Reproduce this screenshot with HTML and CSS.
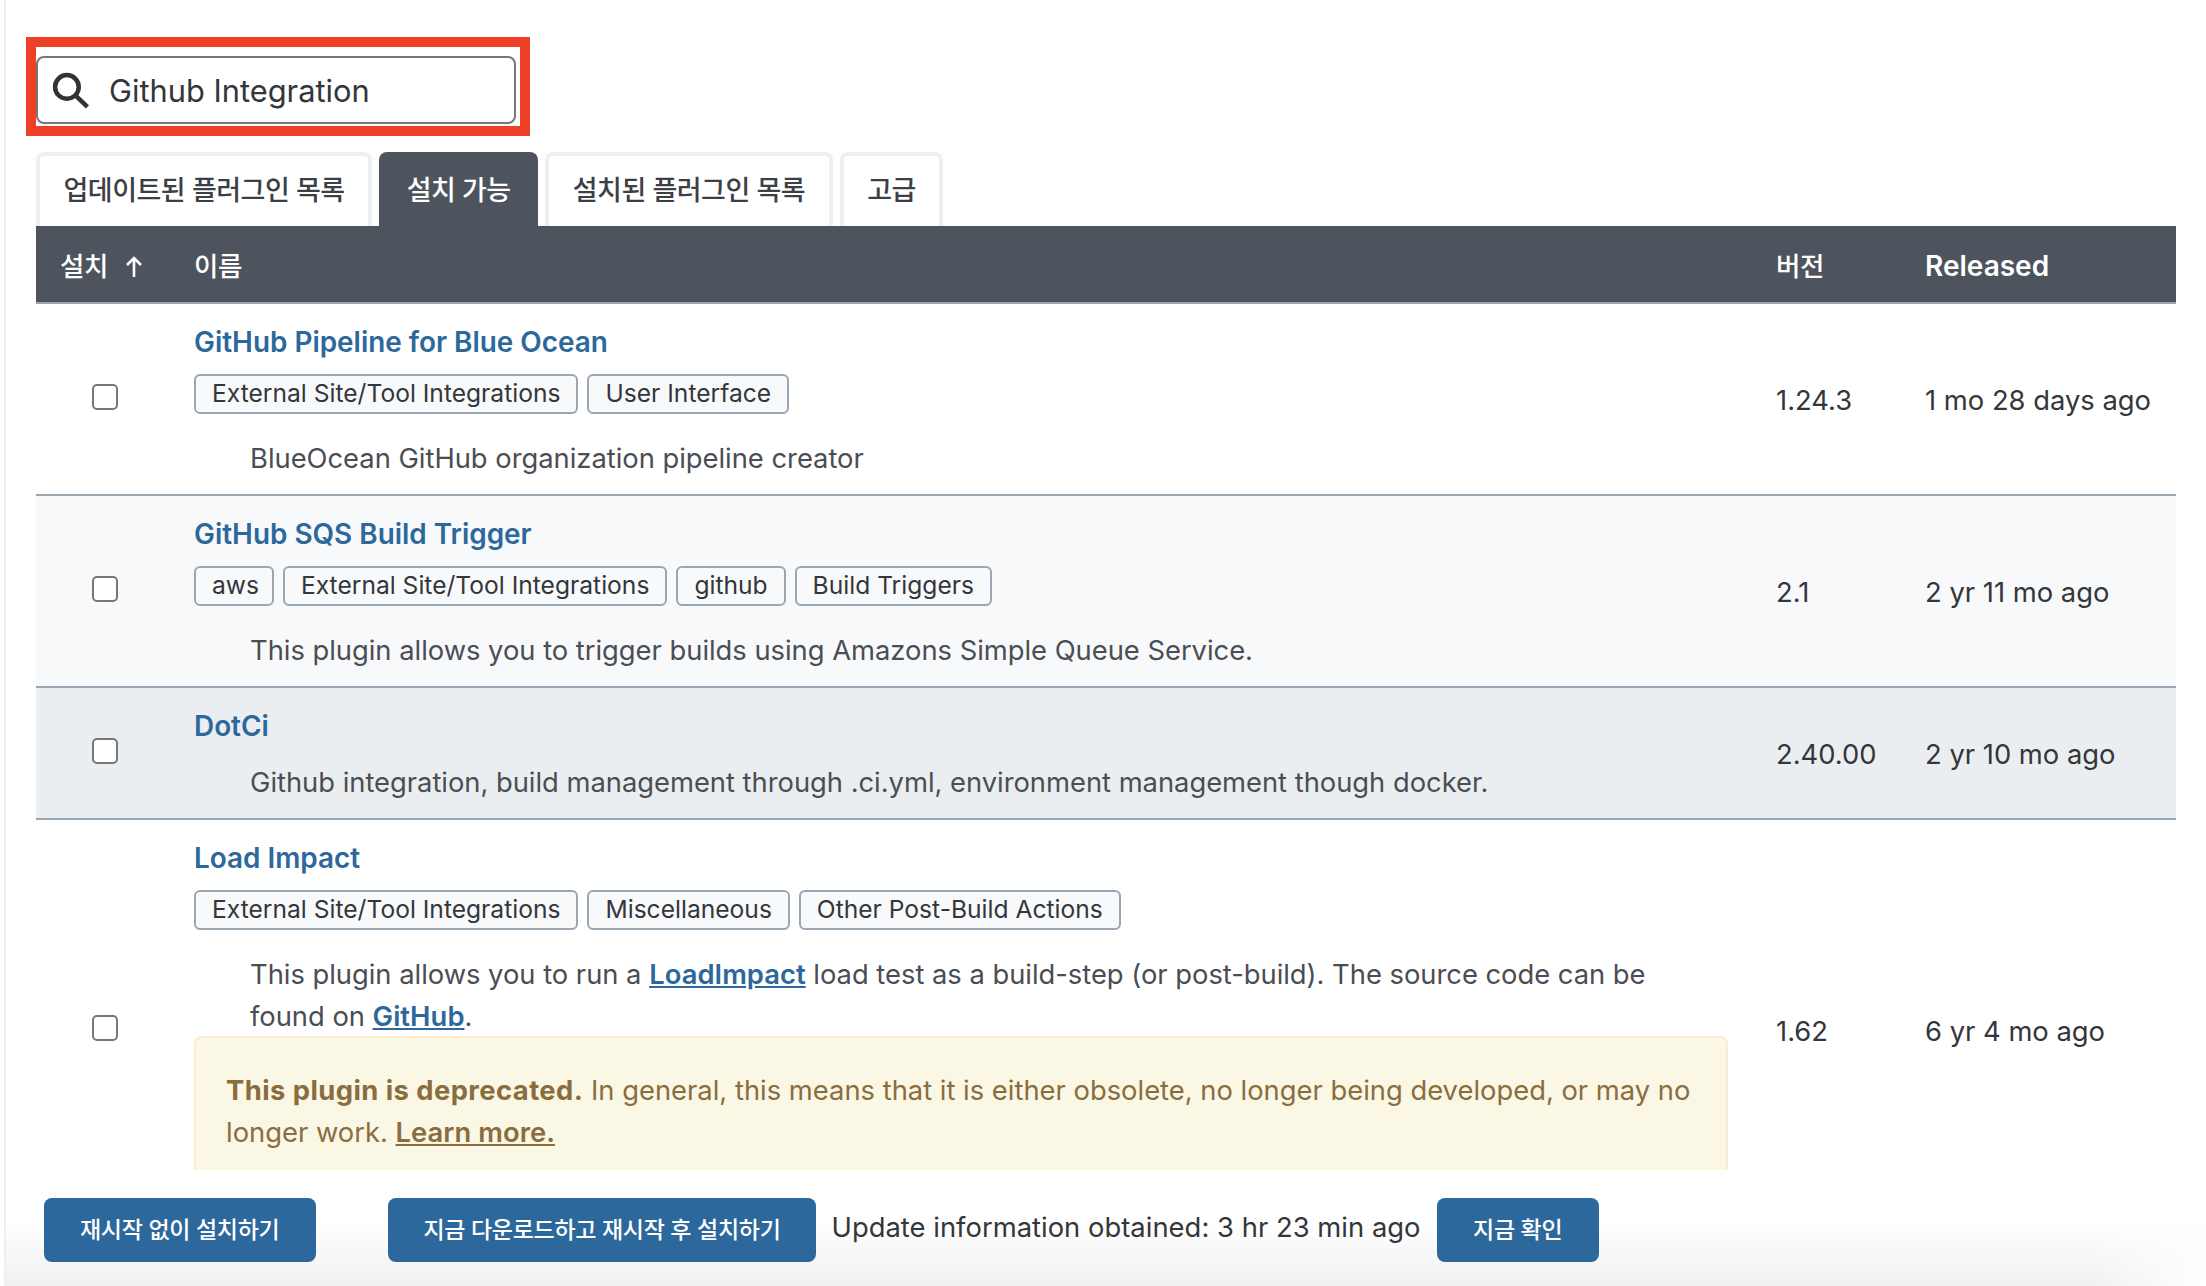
FILE: index.html
```html
<!DOCTYPE html>
<html lang="ko">
<head>
<meta charset="utf-8">
<title>플러그인 관리</title>
<link rel="stylesheet" href="styles.css">
</head>
<body>
<div class="page">
  <div class="content">
    <div class="search-mark">
      <label class="search">
        <svg class="search-icon" viewBox="0 0 36 36" aria-hidden="true"><circle cx="14.500" cy="14.500" r="11.500"/><path d="M23 23 34.500 34"/></svg>
        <span class="search-text">Github Integration</span>
      </label>
    </div>
    <nav class="tabs">
      <a class="tab">업데이트된 플러그인 목록</a>
      <a class="tab active">설치 가능</a>
      <a class="tab">설치된 플러그인 목록</a>
      <a class="tab">고급</a>
    </nav>
    <table class="plugins">
      <colgroup><col class="c-check"><col class="c-name"><col class="c-ver"><col class="c-rel"></colgroup>
      <thead>
        <tr>
          <th class="th-check"><span class="ko">설치</span><svg class="arrow" viewBox="0 0 18 22" aria-hidden="true"><path d="M9 21V2M2 9l7-7 7 7"/></svg></th>
          <th><span class="ko">이름</span></th>
          <th><span class="ko">버전</span></th>
          <th>Released</th>
        </tr>
      </thead>
      <tbody>
        <tr>
          <td class="check"><input type="checkbox"></td>
          <td>
            <a class="title">GitHub Pipeline for Blue Ocean</a>
            <div class="labels"><span class="label">External Site/Tool Integrations</span><span class="label">User Interface</span></div>
            <p class="desc">BlueOcean GitHub organization pipeline creator</p>
          </td>
          <td>1.24.3</td>
          <td>1 mo 28 days ago</td>
        </tr>
        <tr class="alt">
          <td class="check"><input type="checkbox"></td>
          <td>
            <a class="title">GitHub SQS Build Trigger</a>
            <div class="labels"><span class="label tight">aws</span><span class="label">External Site/Tool Integrations</span><span class="label">github</span><span class="label">Build Triggers</span></div>
            <p class="desc">This plugin allows you to trigger builds using Amazons Simple Queue Service.</p>
          </td>
          <td>2.1</td>
          <td>2 yr 11 mo ago</td>
        </tr>
        <tr class="hover">
          <td class="check"><input type="checkbox"></td>
          <td>
            <a class="title">DotCi</a>
            <p class="desc">Github integration, build management through .ci.yml, environment management though docker.</p>
          </td>
          <td>2.40.00</td>
          <td>2 yr 10 mo ago</td>
        </tr>
        <tr>
          <td class="check"><input type="checkbox"></td>
          <td>
            <a class="title">Load Impact</a>
            <div class="labels"><span class="label">External Site/Tool Integrations</span><span class="label">Miscellaneous</span><span class="label">Other Post-Build Actions</span></div>
            <p class="desc">This plugin allows you to run a <a class="inline">LoadImpact</a> load test as a build-step (or post-build). The source code can be found on <a class="inline">GitHub</a>.</p>
            <div class="warning"><strong>This plugin is deprecated.</strong> In general, this means that it is either obsolete, no longer being developed, or may no longer work. <a class="learn">Learn more.</a></div>
          </td>
          <td>1.62</td>
          <td>6 yr 4 mo ago</td>
        </tr>
      </tbody>
    </table>
  </div>
  <footer class="bar">
    <button class="btn first">재시작 없이 설치하기</button>
    <button class="btn wide">지금 다운로드하고 재시작 후 설치하기</button>
    <span class="status">Update information obtained: 3 hr 23 min ago</span>
    <button class="btn">지금 확인</button>
  </footer>
</div>
</body>
</html>
```
FILE: styles.css
```css
* { box-sizing: border-box; }
html, body { margin: 0; height: 100%; overflow: hidden; background: #fff; }
body {
  font-family: Inter, "Noto Sans CJK KR", sans-serif;
  font-size: 27.360px;
  line-height: 42px;
  color: #33363a;
}
.page {
  height: 1286px;
  margin-left: 4px;
  border-left: 2px solid #edf0f2;
  display: flex;
  flex-direction: column;
}
.content {
  height: 1170px;
  overflow: hidden;
  padding: 37px 30px 0 30px;
}
.search-mark {
  width: 504px;
  height: 99px;
  margin-left: -10px;
  border: 10px solid #ee4026;
  padding: 9px 4px 2px 0;
}
.search {
  display: flex;
  align-items: center;
  height: 68px;
  border: 2px solid #777;
  border-radius: 8px;
  padding-left: 14px;
  gap: 20px;
}
.search-icon { width: 37px; height: 37px; fill: none; stroke: #333; stroke-width: 4.400; flex: none; }
.search-text { font-size: 30.800px; padding-top: 1px; }
.tabs { display: flex; gap: 7px; margin-top: 16px; height: 74px; }
.tab {
  display: flex;
  align-items: center;
  padding: 0 23.500px;
  border: 4px solid #edf0f3;
  border-bottom: 0;
  border-radius: 8px 8px 0 0;
  font-size: 27px;
  letter-spacing: -0.5px;
  font-weight: 500;
  color: #3c4046;
}
.tab.active { background: #4d545d; border-color: #4d545d; color: #fff; }
.plugins {
  width: 2140px;
  table-layout: fixed;
  border-collapse: separate;
  border-spacing: 0;
}
.c-check { width: 134px; }
.c-ver { width: 149px; }
.c-rel { width: 275px; }
.plugins th {
  background: #4d545d;
  color: #fff;
  font-size: 28px;
  font-weight: 600;
  text-align: left;
  height: 78px;
  padding: 3px 0 0 24px;
  border-bottom: 2px solid #9aa7b3;
}
.ko { font-size: 26.500px; letter-spacing: -0.3px; font-weight: 500; }
.th-check { white-space: nowrap; }
.arrow {
  width: 18px;
  height: 22px;
  margin-left: 17px;
  vertical-align: -2px;
  fill: none;
  stroke: #fff;
  stroke-width: 2.600;
}
.plugins td {
  padding: 17px 24px 15px;
  border-bottom: 2px solid #9aa7b3;
  vertical-align: middle;
}
.plugins td:nth-child(n+3) { padding-right: 0; padding-top: 17px; }
.plugins tbody tr:last-child td { border-bottom: 0; }
.alt td { background: #f8f9fa; }
.hover td { background: #ebeef1; }
.plugins td.check { padding: 0 0 4px 56px; }
.check input {
  appearance: none;
  display: block;
  width: 26px;
  height: 26px;
  margin: 0;
  border: 2px solid #777;
  border-radius: 5px;
  background: #fff;
}
.title { display: block; font-size: 27.900px; font-weight: 600; color: #2c689b; }
.labels { display: flex; gap: 9px; margin-top: 11px; margin-bottom: 23px; }
.label {
  height: 40px;
  padding: 0 16px;
  border: 2px solid #9aa7b3;
  border-radius: 6px;
  background: #f8f9fa;
  font-size: 24.600px;
  line-height: 35px;
  color: #33363a;
}
.label.tight { padding-right: 13px; }
.desc { margin: 14px 0 0; padding: 0 30px 0 56px; color: #4a4e54; letter-spacing: -0.02px; }
.inline { color: #2c689b; font-weight: 600; text-decoration: underline; letter-spacing: 0.05px; }
.warning {
  margin: -1px 0 39px;
  padding: 31px 30px;
  border: 2px solid #faecd0;
  border-radius: 8px;
  background: #fbf7e5;
  color: #8a6d3f;
}
.warning strong { font-weight: 700; letter-spacing: 0.44px; }
.learn { font-weight: 600; text-decoration: underline; letter-spacing: 0.05px; }
.bar {
  flex: 1;
  display: flex;
  align-items: flex-start;
  gap: 16px;
  padding: 28px 0 0 38px;
  background:
    radial-gradient(circle at 100% 100%, #fff 0, rgba(255,255,255,0) 120px),
    linear-gradient(to bottom, #fff 45%, #f0f0f0 100%);
}
.btn {
  height: 64px;
  padding: 0 36.500px 5px;
  border: 0;
  border-radius: 8px;
  background: #2c689b;
  color: #fff;
  font: 500 23px Inter, "Noto Sans CJK KR", sans-serif;
  letter-spacing: -0.3px;
}
.btn.first { margin-right: 56px; padding-left: 36px; padding-right: 37px; }
.btn.wide { padding-left: 35px; padding-right: 35px; }
.status { line-height: 58px; letter-spacing: 0.03px; }
```
